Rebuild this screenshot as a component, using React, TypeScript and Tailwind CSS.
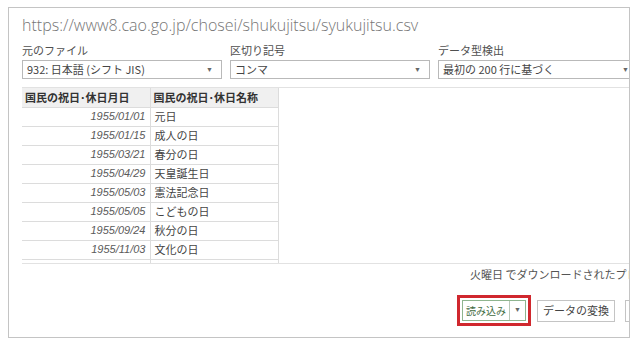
import type React from 'react';

const jp = "font-['Noto_Sans_CJK_JP',sans-serif]";

const rows: [string, string][] = [
  ['1955/01/01', '元日'],
  ['1955/01/15', '成人の日'],
  ['1955/03/21', '春分の日'],
  ['1955/04/29', '天皇誕生日'],
  ['1955/05/03', '憲法記念日'],
  ['1955/05/05', 'こどもの日'],
  ['1955/09/24', '秋分の日'],
  ['1955/11/03', '文化の日'],
  ['1955/11/23', '勤労感謝の日'],
];

const Select: React.FC<{ label: string; value: string }> = ({ label, value }) => (
  <div className="w-[200px] shrink-0">
    <div className={`${jp} text-[11px] leading-[15px] text-[#505050] h-[19px] pt-[2px]`}>{label}</div>
    <div className="h-[19px] border border-[#b9b9b9] flex items-center justify-between pl-[4px] pr-[8px]">
      <span className={`${jp} text-[11px] text-[#454545] leading-none`}>{value}</span>
      <span className="text-[7px] text-[#666] leading-none">▼</span>
    </div>
  </div>
);

export default function App() {
  return (
    <div className="w-[638px] h-[344px] bg-white overflow-hidden pt-[7px] pl-[8px]">
      <div className="w-[622px] h-[331px] border border-[#c4c4c4] overflow-hidden pl-[13px]">
        <div className="w-[700px]">
          <div className="h-[33px] pt-[7px] font-['Open_Sans',sans-serif] font-light text-[16px] leading-[20px] text-[#767676] whitespace-nowrap">
            https://www8.cao.go.jp/chosei/shukujitsu/syukujitsu.csv
          </div>
          <div className="flex gap-[8px]">
            <Select label="元のファイル" value="932: 日本語 (シフト JIS)" />
            <Select label="区切り記号" value="コンマ" />
            <Select label="データ型検出" value="最初の 200 行に基づく" />
          </div>
          <div className="mt-[8px] h-[177px] border-t border-b border-[#e2e2e2] overflow-hidden">
            <table className="border-collapse">
              <thead>
                <tr className="bg-[#f0f0f0] h-[19px]">
                  <th className={`${jp} w-[128px] text-left font-bold text-[11px] text-[#333] px-[3px] border-r border-[#dcdcdc]`}>
                    国民の祝日･休日月日
                  </th>
                  <th className={`${jp} w-[128px] text-left font-bold text-[11px] text-[#333] px-[3px] border-r border-[#dcdcdc]`}>
                    国民の祝日･休日名称
                  </th>
                </tr>
              </thead>
              <tbody>
                {rows.map(([d, n]) => (
                  <tr key={d} className="h-[19px] border-t border-[#dcdcdc]">
                    <td className="font-['Liberation_Sans',sans-serif] italic text-[11px] text-[#5a5a5a] text-right pr-[4px] border-r border-[#dcdcdc]">
                      {d}
                    </td>
                    <td className={`${jp} text-[11px] text-[#444] pl-[4px] border-r border-[#dcdcdc]`}>{n}</td>
                  </tr>
                ))}
              </tbody>
            </table>
          </div>
          <div className={`${jp} pl-[448px] pt-[2px] h-[31px] text-[11px] text-[#555] whitespace-nowrap`}>
            火曜日 でダウンロードされたプレビュー
          </div>
          <div className="flex items-center pl-[435px]">
            <div className="border-[3px] border-[#d0282e] p-[2px]">
              <div className="flex h-[21px] border border-[#8fb58f] bg-white">
                <span className={`${jp} px-[3px] text-[10px] leading-[19px] text-[#3f6b3f]`}>読み込み</span>
                <span className="w-[16px] border-l border-[#b8c8b8] text-[7px] text-[#666] flex items-center justify-center">▼</span>
              </div>
            </div>
            <div className={`${jp} ml-[6px] h-[22px] w-[78px] border border-[#c4c4c4] text-[11px] text-[#444] flex items-center justify-center`}>
              データの変換
            </div>
            <div className="ml-[10px] h-[22px] w-[60px] border border-[#c4c4c4]" />
          </div>
        </div>
      </div>
    </div>
  );
}
